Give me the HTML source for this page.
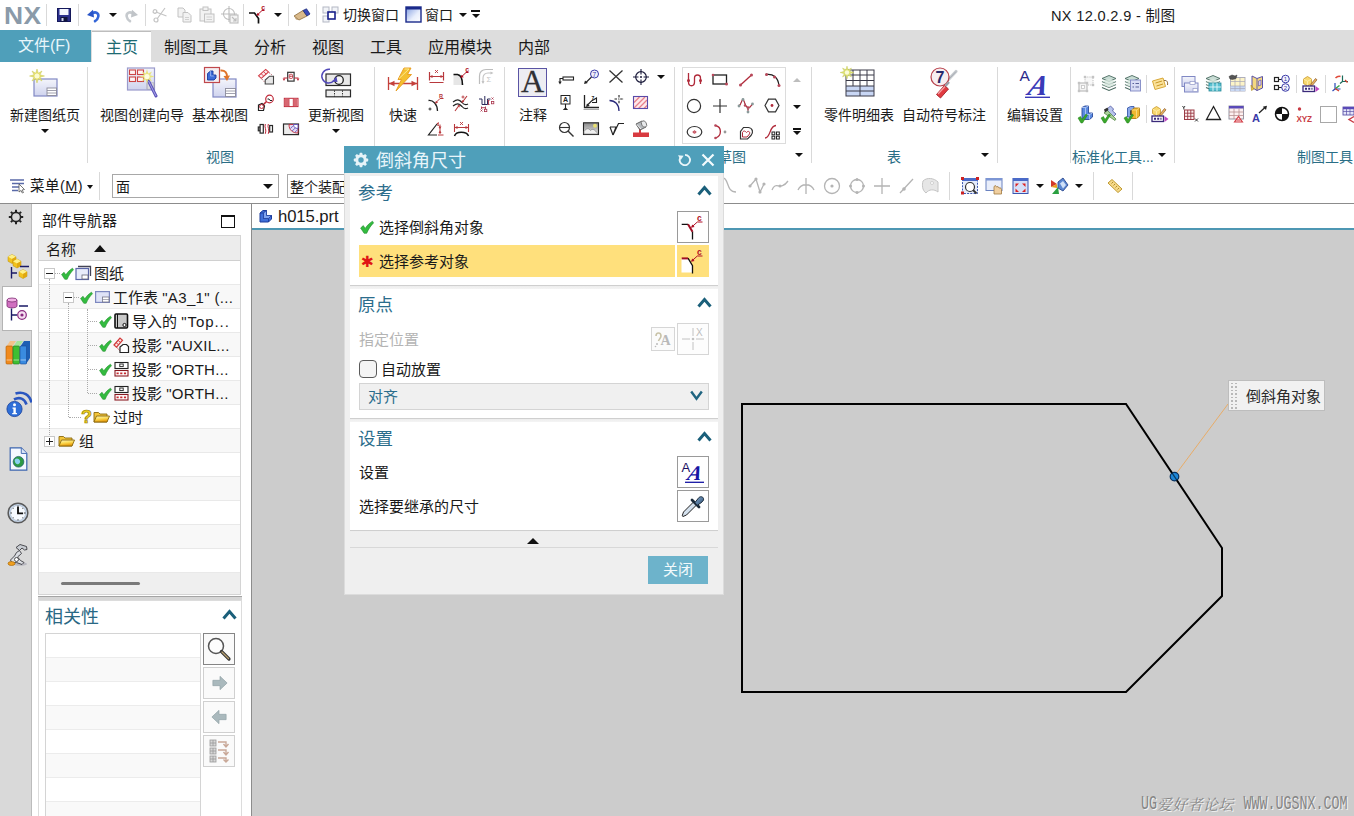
<!DOCTYPE html>
<html><head><meta charset="utf-8"><title>NX 12.0.2.9 - 制图</title>
<style>
html,body{margin:0;padding:0}
body{width:1354px;height:816px;position:relative;overflow:hidden;background:#fff;font-family:"Liberation Sans","Noto Sans CJK SC",sans-serif;font-size:14px;color:#1a1a1a}
.a{position:absolute}
.t{position:absolute;white-space:nowrap;line-height:20px;height:20px}
.vs{position:absolute;width:1px;background:#d9d9d9}
.hs{position:absolute;height:1px;background:#d9d9d9}
svg{position:absolute;overflow:visible}
.teal{color:#2a6e86}
.tri{position:absolute;width:0;height:0;border-left:4px solid transparent;border-right:4px solid transparent;border-top:4px solid #111}
</style></head><body>
<!-- TITLE BAR -->
<div class="a" id="titlebar" style="left:0;top:0;width:1354px;height:30px;background:#fff"></div>
<div class="t" style="left:4px;top:3px;font:bold 24px/26px 'Liberation Sans',sans-serif;color:#8a9aa9;letter-spacing:.5px;transform:scaleX(1.1);transform-origin:0 0">NX</div>
<div class="t" style="left:343px;top:5px;font-size:14px">切换窗口</div>
<div class="t" style="left:425px;top:5px;font-size:14px">窗口</div>
<div class="t" style="left:1051px;top:6px;font-size:14.600px;letter-spacing:.32px">NX 12.0.2.9 - 制图</div>
<!-- title icons -->
<div class="vs" style="left:46px;top:4px;height:22px"></div>
<svg style="left:57px;top:8px" width="14" height="14" viewBox="0 0 14 14"><rect x=".5" y=".5" width="13" height="13" fill="#2a2f8c" stroke="#14185a" stroke-width="1"/><rect x="2.500" y="1" width="9" height="6" fill="#f4f6ff"/><rect x="3.500" y="9" width="7" height="4.500" fill="#10143c"/><rect x="4.500" y="10" width="2" height="3" fill="#cfd4f0"/></svg>
<div class="vs" style="left:78px;top:4px;height:22px"></div>
<svg style="left:86px;top:8px" width="15" height="14" viewBox="0 0 15 14"><path d="M6.500 5.200C9.500 3.200 13 5 12.300 8.600C12 10.400 10.800 12 9 13.200" fill="none" stroke="#3466d8" stroke-width="2.600" stroke-linecap="round"/><path d="M1 7L7 1.800L8 9.500Z" fill="#2a56c8"/></svg>
<div class="tri" style="left:109px;top:13px"></div>
<svg style="left:124px;top:8px" width="15" height="14" viewBox="0 0 15 14"><path d="M8.500 5.200C5.500 3.200 2 5 2.700 8.600C3 10.400 4.200 12 6 13.200" fill="none" stroke="#c6cace" stroke-width="2.600" stroke-linecap="round"/><path d="M14 7L8 1.800L7 9.500Z" fill="#c0c4c8"/></svg>
<div class="vs" style="left:145px;top:4px;height:22px"></div>
<svg style="left:152px;top:7px" width="17" height="16" viewBox="0 0 17 16"><g fill="none" stroke="#c4c4c4" stroke-width="1.200"><path d="M13 1L5 12M4 5L14.500 9"/><circle cx="4" cy="13" r="2"/><circle cx="2.800" cy="4.500" r="1.800" transform="rotate(20 3 5)"/></g></svg>
<svg style="left:177px;top:7px" width="15" height="16" viewBox="0 0 15 16"><g fill="#f2f2f2" stroke="#c2c2c2" stroke-width="1"><path d="M1 1H6L8 3V10H1Z"/><path d="M6 5.500H11L14 8.500V15H6Z"/></g><path d="M8 10.500H12M8 12.500H12" stroke="#c8c8c8" stroke-width=".8"/></svg>
<svg style="left:199px;top:6px" width="16" height="17" viewBox="0 0 16 17"><g fill="#f2f2f2" stroke="#c2c2c2" stroke-width="1"><rect x="1" y="3" width="11" height="12"/><rect x="4" y="1" width="5" height="3.500"/><rect x="5.500" y="8" width="9.500" height="8"/></g><path d="M7.500 11H13M7.500 13.500H13" stroke="#c8c8c8" stroke-width=".8"/></svg>
<svg style="left:221px;top:6px" width="18" height="18" viewBox="0 0 18 18"><g fill="none" stroke="#bdbdbd" stroke-width="1.100"><circle cx="8" cy="8" r="5.500"/><path d="M8 0V16M0 8H16"/><rect x="9" y="9" width="8" height="8" fill="#f4f4f4"/><path d="M11 11L15 15M15 12V15H12"/></g></svg>
<div class="vs" style="left:243px;top:4px;height:22px"></div>
<svg style="left:248px;top:5px" width="19" height="19" viewBox="0 0 19 19"><path d="M1 8H6.500L10.500 13.500V18.500" fill="none" stroke="#111" stroke-width="1.700"/><path d="M16.500 5.500H14L9.500 9.800" fill="none" stroke="#b01024" stroke-width="1"/><path d="M8.300 10.800L9.600 7.800L11.800 10.200Z" fill="#b01024"/><text x="13.200" y="4.800" font-family="Liberation Sans,sans-serif" font-size="7" font-weight="bold" fill="#b01024">c</text></svg>
<div class="tri" style="left:274px;top:13px"></div>
<div class="vs" style="left:288px;top:4px;height:22px"></div>
<svg style="left:293px;top:8px" width="18" height="13" viewBox="0 0 18 13"><path d="M1 8L10 2.500L14 8L6 12Z" fill="#d9b98a" stroke="#8a6a3a" stroke-width=".8"/><path d="M10 2.500L13.500 0.800L17 6L14 8Z" fill="#3a4ab8" stroke="#22307a" stroke-width=".8"/><path d="M1 8L3 11.500L6 12" fill="#b89868"/></svg>
<div class="vs" style="left:316px;top:4px;height:22px"></div>
<svg style="left:322px;top:6px" width="17" height="17" viewBox="0 0 17 17"><g fill="#f2f4f8" stroke="#b4b8c4" stroke-width="1"><rect x="1" y="1" width="6" height="6"/><rect x="10" y="1" width="6" height="6"/><rect x="1" y="10" width="6" height="6"/></g><rect x="6" y="6" width="7" height="7" fill="#fff" stroke="#18208a" stroke-width="1.600"/></svg>
<svg style="left:405px;top:6px" width="17" height="17" viewBox="0 0 17 17"><defs><linearGradient id="wg" x1="0" y1="0" x2="1" y2="1"><stop offset="0" stop-color="#7f9be0"/><stop offset=".6" stop-color="#e8eefc"/><stop offset="1" stop-color="#fff"/></linearGradient></defs><rect x="1" y="1" width="15" height="15" fill="url(#wg)" stroke="#1a2a8a" stroke-width="1.400"/><rect x="1" y="1" width="15" height="2.500" fill="#1a2a8a"/></svg>
<div class="tri" style="left:459px;top:13px"></div>
<div class="a" style="left:471px;top:10px;width:9px;height:2px;background:#111"></div>
<div class="tri" style="left:471.500px;top:14px"></div>
<!-- TAB BAR -->
<div class="a" style="left:0;top:30px;width:1354px;height:32px;background:#dddddd"></div>
<div class="a" style="left:0;top:30px;width:91px;height:32px;background:#4f9fba"></div>
<div class="t" style="left:18px;top:35px;font-size:16px;line-height:22px;color:#e8f6fb">文件(F)</div>
<div class="a" style="left:92px;top:31px;width:59px;height:31px;background:#fff;border-top:1px solid #bdbdbd;box-sizing:border-box"></div>
<div class="t" style="left:106px;top:37px;font-size:16px;line-height:22px;color:#1d6a72">主页</div>
<div class="t" style="left:164px;top:37px;font-size:16px;line-height:22px">制图工具</div>
<div class="t" style="left:254px;top:37px;font-size:16px;line-height:22px">分析</div>
<div class="t" style="left:312px;top:37px;font-size:16px;line-height:22px">视图</div>
<div class="t" style="left:370px;top:37px;font-size:16px;line-height:22px">工具</div>
<div class="t" style="left:428px;top:37px;font-size:16px;line-height:22px">应用模块</div>
<div class="t" style="left:518px;top:37px;font-size:16px;line-height:22px">内部</div>
<!-- RIBBON -->
<div class="a" id="ribbon" style="left:0;top:62px;width:1354px;height:106px;background:#fff;border-bottom:1px solid #d5d5d5;box-sizing:border-box"></div>
<!-- ribbon group 1 -->
<svg style="left:30px;top:68px" width="30" height="30" viewBox="0 0 30 30"><defs><linearGradient id="sh" x1="0" y1="0" x2="0" y2="1"><stop offset="0" stop-color="#f4f5fb"/><stop offset="1" stop-color="#cfd3ee"/></linearGradient></defs><rect x="4" y="11" width="23" height="17" fill="url(#sh)" stroke="#8088c4" stroke-width="1.200"/><rect x="17" y="20" width="9.500" height="7.500" fill="#fff" stroke="#8a8a9a" stroke-width=".9"/><path d="M17 22.500H26.500M17 25H26.500" stroke="#8a8a9a" stroke-width=".8"/><path d="M7 1L8.300 5.200L12 3L10 6.800L14.500 8L10 9.200L12 13L8.300 10.800L7 15L5.700 10.800L2 13L4 9.200L-.5 8L4 6.800L2 3L5.700 5.200Z" fill="#e6e070" stroke="#c8c85a" stroke-width=".5"/><circle cx="7" cy="8" r="2.500" fill="#fbfbd0"/></svg>
<div class="t" style="left:10px;top:105px">新建图纸页</div>
<div class="tri" style="left:41px;top:129px"></div>
<div class="vs" style="left:87px;top:67px;height:96px"></div>
<!-- group 2: view -->
<svg style="left:126px;top:66px" width="34" height="34" viewBox="0 0 34 34"><rect x="1.500" y="2" width="27" height="22" fill="url(#sh)" stroke="#9a9acc" stroke-width="1.200"/><g fill="#fdf3f3" stroke="#cc4444" stroke-width="1.100"><rect x="3.500" y="4" width="6" height="4.500"/><rect x="11.500" y="4" width="6" height="4.500"/><rect x="3.500" y="11" width="6" height="4.500"/><rect x="11.500" y="11" width="6" height="4.500"/></g><rect x="21" y="17" width="7" height="6" fill="#fff" stroke="#9a9aa8" stroke-width=".8"/><path d="M21 19H28M21 21H28" stroke="#9a9aa8" stroke-width=".7"/><path d="M22 14L30 30" stroke="#5a52b8" stroke-width="3" stroke-linecap="round"/><path d="M22.500 15L30 30" stroke="#a8a4e8" stroke-width="1"/><path d="M21 3L22.200 7.500L26 5.500L24 9.300L28.500 10.500L24 11.700L26 15.500L22.200 13.500L21 18L19.800 13.500L16 15.500L18 11.700L13.500 10.500L18 9.300L16 5.500L19.800 7.500Z" fill="#e8e478" opacity=".95"/><circle cx="21" cy="10.500" r="2.600" fill="#fdfde0"/></svg>
<div class="t" style="left:100px;top:105px">视图创建向导</div>
<svg style="left:203px;top:66px" width="34" height="34" viewBox="0 0 34 34"><rect x="10" y="13" width="23" height="18" fill="url(#sh)" stroke="#8088c4" stroke-width="1.200"/><rect x="22.500" y="22.500" width="10" height="8" fill="#fff" stroke="#8a8a9a" stroke-width=".9"/><path d="M22.500 25H32.500M22.500 27.500H32.500" stroke="#8a8a9a" stroke-width=".8"/><rect x="1.500" y="1.500" width="15" height="15" fill="#f4eef2" stroke="#c0484c" stroke-width="1.200"/><path d="M4.500 7.500L7.500 5H10V9H13V12L11 14H4.500Z" fill="#3d6cd8" stroke="#1a3a9c" stroke-width=".9"/><path d="M7.500 5V10H11" fill="none" stroke="#9cb8f4" stroke-width=".8"/><path d="M17.500 4.500C22 4 24.500 7 24 11.500" fill="none" stroke="#e0742c" stroke-width="2"/><path d="M20.500 10L24 15L27 9.500Z" fill="#e0742c"/></svg>
<div class="t" style="left:192px;top:105px">基本视图</div>
<svg style="left:257px;top:68px" width="18" height="18" viewBox="0 0 18 18"><path d="M1.500 7.800L8.700 1.400L11.500 3.900L4.300 10.300Z" fill="#fdeaec" stroke="#d23a44" stroke-width="1.100"/><path d="M4 5.600L6.800 8.100M6.300 3.500L9.100 6" stroke="#d23a44" stroke-width=".9"/><path d="M12 4.500L15.500 7.500M4.800 11L7.500 14" stroke="#a8323c" stroke-width=".9" stroke-dasharray="1.200 1.200"/><path d="M8.200 16V12L12.500 8.200H16.500V16Z" fill="#e8e8e8" stroke="#444" stroke-width="1.100"/></svg>
<svg style="left:282px;top:70px" width="18" height="14" viewBox="0 0 18 14"><rect x="5.700" y="2.300" width="6.400" height="8.800" fill="#fff" stroke="#333" stroke-width="1.200"/><rect x="7.300" y="4.300" width="3.200" height="4.200" rx="1" fill="none" stroke="#c02a3a" stroke-width=".9"/><circle cx="8.900" cy="6.400" r=".8" fill="#c02a3a"/><path d="M1.500 8H5.700M12.100 8H16.500" fill="none" stroke="#c02a3a" stroke-width="1"/><path d="M0.600 8.500L2 11L3.400 8.500ZM14.600 8.500L16 11L17.400 8.500Z" fill="#c02a3a"/></svg>
<svg style="left:257px;top:94px" width="18" height="18" viewBox="0 0 18 18"><circle cx="12.500" cy="5" r="3.800" fill="#fff" stroke="#c02a3a" stroke-width="1.200"/><path d="M10.500 5H12L13 6.500H15" fill="none" stroke="#222" stroke-width="1"/><path d="M9.500 7.500L6 11" stroke="#c02a3a" stroke-width="1.600"/><path d="M1.500 11L5 9.500L7.500 12L6.500 16.500H1.500Z" fill="#fff" stroke="#222" stroke-width="1.200"/><circle cx="4.600" cy="12.500" r="2" fill="none" stroke="#c02a3a" stroke-width="1"/></svg>
<svg style="left:283px;top:97px" width="16" height="11" viewBox="0 0 16 11"><defs><pattern id="xh" width="2" height="2" patternUnits="userSpaceOnUse"><rect width="2" height="2" fill="#fbe4e6"/><path d="M0 0L2 2M2 0L0 2" stroke="#c8303f" stroke-width=".7"/></pattern></defs><rect x="1.300" y="1.300" width="13.700" height="8.300" fill="#fff" stroke="#c02a3a" stroke-width="1"/><rect x="1.800" y="1.800" width="4" height="7.300" fill="url(#xh)"/><rect x="10.500" y="1.800" width="4" height="7.300" fill="url(#xh)"/><path d="M6 1.500V9.500M10.300 1.500V9.500" stroke="#c02a3a" stroke-width=".8"/></svg>
<svg style="left:257px;top:122px" width="18" height="14" viewBox="0 0 18 14"><g fill="#fff" stroke="#2a2a2a" stroke-width="1.200"><rect x="1.300" y="5" width="1.800" height="3.800"/><rect x="3.100" y="2.500" width="3.200" height="8.600"/><rect x="12.700" y="3.500" width="2.800" height="6.500"/></g><path d="M8.300 2C7 5 10 8 8.300 11.800M11.300 2C10 5 13 8 11.300 11.800" fill="none" stroke="#c02a3a" stroke-width="1"/></svg>
<svg style="left:282px;top:122px" width="18" height="15" viewBox="0 0 18 15"><rect x="1.500" y="2" width="15" height="10.600" fill="#ececec" stroke="#2a2a2a" stroke-width="1.200"/><path d="M7 2.500C7 8 10.500 11 16 11V2.500Z" fill="#e4dcf4" stroke="#c02a3a" stroke-width=".9"/><path d="M11.500 2.500C11.500 5 13 6.500 16 6.500V2.500Z" fill="#fff" stroke="#5a52b8" stroke-width=".9"/><path d="M8.500 6.500L10.800 4M10 9L13.300 6M12.800 10.300L15.800 7.500" stroke="#5a52b8" stroke-width=".8"/></svg>
<svg style="left:319px;top:66px" width="34" height="34" viewBox="0 0 34 34"><rect x="7" y="8" width="24.500" height="11.500" fill="#e8e8e8" stroke="#2a2a2a" stroke-width="1.200"/><rect x="7" y="24" width="24.500" height="6.800" fill="#ececec" stroke="#2a2a2a" stroke-width="1.200"/><path d="M15.500 24.500V30.500M23.500 24.500V30.500" stroke="#222" stroke-width="1" stroke-dasharray="1.300 1.300"/><circle cx="20" cy="14" r="4.300" fill="#f4f4f4" stroke="#222" stroke-width="1.300"/><path d="M11 3.200C4.500 2.500 1.500 9 3.500 13C5.500 17.500 11.500 18.500 15 14.500" fill="none" stroke="#5048b8" stroke-width="1.500"/><path d="M13 15.500L17.500 10.500L18.500 16Z" fill="#5048b8"/></svg>
<div class="t" style="left:308px;top:105px">更新视图</div>
<div class="tri" style="left:332px;top:129px"></div>
<div class="t teal" style="left:206px;top:147px">视图</div>
<div class="vs" style="left:374px;top:67px;height:96px"></div>
<!-- group 3: dimension -->
<svg style="left:386px;top:66px" width="34" height="30" viewBox="0 0 34 30"><path d="M2.500 11V24M31.500 11V24M3 17.500H31" stroke="#c4403c" stroke-width="1.300" fill="none"/><path d="M3 17.500L8.500 14.800V20.200ZM31 17.500L25.500 14.800V20.200Z" fill="#c4403c"/><path d="M18 2H25L21.500 8.500H25.500L10 25L15.500 13.500H12Z" fill="#f4c030" stroke="#e89a1c" stroke-width=".9"/><path d="M18.500 3H23L13 12.500" fill="none" stroke="#fce890" stroke-width="1"/></svg>
<div class="t" style="left:389px;top:105px">快速</div>
<svg style="left:428px;top:69px" width="17" height="16" viewBox="0 0 17 16"><path d="M1.500 3V11.500M15.500 3V11.500M1.500 7.500H15.500M1.500 13.500H15.500" stroke="#b8383c" stroke-width="1.200" fill="none"/><path d="M1.500 7.500L4.500 6V9ZM15.500 7.500L12.500 6V9Z" fill="#b8383c"/><path d="M7 1L10 4M10 1L7 4" stroke="#b8383c" stroke-width=".9"/></svg>
<svg style="left:452px;top:67px" width="19" height="19" viewBox="0 0 19 19"><path d="M1.500 8H6L10 13V18H1.500Z" fill="#e6e6e6"/><path d="M1.500 7.500H5.500C8.500 8 10.500 11 10.500 18" fill="none" stroke="#111" stroke-width="1.600"/><path d="M16.500 5.500H14L9.500 9.800" fill="none" stroke="#b01024" stroke-width="1"/><path d="M8.300 10.800L9.600 7.800L11.800 10.200Z" fill="#b01024"/><text x="13.200" y="4.800" font-family="Liberation Sans,sans-serif" font-size="7" font-weight="bold" fill="#b01024">c</text></svg>
<svg style="left:478px;top:68px" width="17" height="18" viewBox="0 0 17 18"><path d="M1.500 16V8C1.500 4 4 1.500 8 1.500H15" fill="none" stroke="#bdbdbd" stroke-width="1.200"/><path d="M5 15V10C5 7 7 5 10 5H14" fill="none" stroke="#c4c4c4" stroke-width="1.100"/><path d="M3.500 13L5 16L6.500 13ZM12.500 3.500L15.500 5L12.500 6.500Z" fill="#c4c4c4"/><text x="8.500" y="14" font-family="Liberation Sans,sans-serif" font-size="7.500" fill="#c4c4c4">Σ</text></svg>
<svg style="left:427px;top:94px" width="18" height="18" viewBox="0 0 18 18"><path d="M1.500 6.500C6 6 10.500 10 10.500 17" fill="none" stroke="#222" stroke-width="1.300"/><path d="M9 8.500L13 4.500M13 4.500H16.500" stroke="#b8383c" stroke-width="1" fill="none"/><path d="M8 9.800L9 6.800L11 8.800Z" fill="#b8383c"/><text x="12" y="4" font-family="Liberation Sans,sans-serif" font-size="5.500" font-weight="bold" fill="#b8383c">R</text><path d="M3 13.500V16.500M1.500 15H4.500" stroke="#222" stroke-width=".9"/></svg>
<svg style="left:452px;top:94px" width="18" height="18" viewBox="0 0 18 18"><path d="M1 8C5 5 7 5 10 8.500C12 11 14 11 16 10M1 12C5 9 7 9 10 12.500C12 15 14 15 16 14" fill="none" stroke="#222" stroke-width="1.200"/><path d="M15 2L10.500 8M3 17L7 11.500" stroke="#b8383c" stroke-width="1.100"/><path d="M9.500 9L10 6L12.300 7.700ZM8 10.500L7.500 13.500L5.300 11.800Z" fill="#b8383c"/><path d="M11 1.500V4.500M9.500 3H12.500" stroke="#b8383c" stroke-width=".9"/></svg>
<svg style="left:478px;top:94px" width="18" height="18" viewBox="0 0 18 18"><path d="M1 5H4V10.500H9.500V5H12.500M6.800 2V10.500" fill="none" stroke="#2a2a5a" stroke-width="1"/><path d="M10.500 6.500V10.500M9.500 6.500H11.500M9.500 10.500H11.500M3.500 12.500V15M7.500 12.500V15M3.500 13.700H7.500" stroke="#a8324a" stroke-width=".9" fill="none"/><g fill="none" stroke="#a8324a" stroke-width=".8"><path d="M13.500 3.500L15.500 5.500M15.500 3.500L13.500 5.500"/><rect x="13.500" y="7.500" width="2.300" height="2.300"/><path d="M2.500 15.500L4.500 17.500M4.500 15.500L2.500 17.500"/><rect x="6.500" y="15.300" width="2.300" height="2.300"/></g></svg>
<svg style="left:427px;top:121px" width="18" height="16" viewBox="0 0 18 16"><path d="M10 3L1.500 14H10" fill="none" stroke="#222" stroke-width="1.200"/><path d="M13 3.500V13M11 14H16.500M10 4C11.500 4 12.500 5 13 6" stroke="#b8383c" stroke-width="1" fill="none"/><path d="M11.500 12L13 9.500L14.500 12ZM11.500 6L13 8L14.500 5.500ZM9.500 2.500L12 1L11.500 4Z" fill="#b8383c"/></svg>
<svg style="left:453px;top:121px" width="17" height="16" viewBox="0 0 17 16"><path d="M1.500 15C3 10 13.500 10 15.500 15" fill="none" stroke="#111" stroke-width="1.500"/><path d="M1.500 3V11M15.500 3V11M1.500 6.500H15.500" stroke="#b8383c" stroke-width="1.100" fill="none"/><path d="M1.500 6.500L4.500 5V8ZM15.500 6.500L12.500 5V8Z" fill="#b8383c"/><path d="M7 1L10 4M10 1L7 4" stroke="#b8383c" stroke-width=".9"/></svg>
<div class="vs" style="left:504px;top:67px;height:96px"></div>
<!-- group 4: annotation -->
<div class="a" style="left:518px;top:68px;width:29px;height:29px;background:#ededf2;border:1px solid #5a54a4;box-sizing:border-box"></div>
<div class="t" style="left:519px;top:64px;width:27px;height:34px;text-align:center;font:32px/34px 'Liberation Serif',serif;color:#303034;-webkit-text-stroke:.3px #303034">A</div>
<div class="t" style="left:519px;top:105px">注释</div>
<svg style="left:557px;top:74px" width="18" height="12" viewBox="0 0 18 12"><path d="M6 4.500H3V9" fill="none" stroke="#222" stroke-width="1.100"/><path d="M1.300 7.500L3 10.500L4.700 7.500Z" fill="#222"/><rect x="6" y="3" width="10.500" height="3" fill="#fff" stroke="#222" stroke-width="1.100"/></svg>
<svg style="left:583px;top:69px" width="17" height="16" viewBox="0 0 17 16"><circle cx="11.500" cy="5" r="4" fill="#f0f0fc" stroke="#3a3aa8" stroke-width="1"/><text x="9.500" y="7.500" font-family="Liberation Sans,sans-serif" font-size="6.500" fill="#3a3aa8">7</text><path d="M8.500 8L2.500 14" stroke="#222" stroke-width="1.100"/><path d="M1 15L2 11.500L4.800 14Z" fill="#222"/></svg>
<svg style="left:608px;top:69px" width="16" height="15" viewBox="0 0 16 15"><path d="M1.500 1.500L14.500 13.500M14.500 1.500L1.500 13.500" stroke="#333" stroke-width="1.300"/></svg>
<svg style="left:632px;top:68px" width="18" height="18" viewBox="0 0 18 18"><circle cx="9" cy="9" r="5.300" fill="none" stroke="#1c1c3c" stroke-width="1.200"/><path d="M9 1V6.500M9 11.500V17M1 9H6.500M11.500 9H17" stroke="#1c1c3c" stroke-width="1.100"/><circle cx="9" cy="9" r="1" fill="#1c1c3c"/></svg>
<div class="tri" style="left:657px;top:75px"></div>
<svg style="left:559px;top:94px" width="13" height="17" viewBox="0 0 13 17"><rect x="2" y="1.500" width="9" height="8.500" fill="#fff" stroke="#222" stroke-width="1"/><text x="3.900" y="8.300" font-family="Liberation Sans,sans-serif" font-size="7" font-weight="bold" fill="#222">A</text><path d="M6.500 10V14" stroke="#222" stroke-width="1.100"/><path d="M3.800 16L6.500 13.200L9.200 16Z" fill="#222"/></svg>
<svg style="left:582px;top:94px" width="18" height="18" viewBox="0 0 18 18"><path d="M2.500 1V13.500H17" fill="none" stroke="#222" stroke-width="1.300"/><path d="M1.500 15.500H17" stroke="#aaa" stroke-width="1"/><path d="M5 11.500L9.500 7L14.500 4V8.500H10" fill="none" stroke="#222" stroke-width="1.100"/><path d="M4 13L5 9.500L7.800 12Z" fill="#222"/><text x="9.500" y="6" font-family="Liberation Sans,sans-serif" font-size="5" font-weight="bold" fill="#222">7</text></svg>
<svg style="left:608px;top:94px" width="18" height="18" viewBox="0 0 18 18"><path d="M1.500 6.500C7 6.500 11 10.500 11 17" fill="none" stroke="#2a2a7a" stroke-width="1.300"/><path d="M11 1V10M6.500 5H16" stroke="#222" stroke-width="1.100" stroke-dasharray="2.500 1.200 .8 1.200"/></svg>
<svg style="left:632px;top:95px" width="17" height="15" viewBox="0 0 17 15"><rect x="1.500" y="1.500" width="14" height="12" fill="#fde8ea"/><path d="M2 7.500L7.500 2M2 13L13 2M6.500 13.500L15 5M12 13.500L15 10.500" stroke="#e8808a" stroke-width="1.300"/><rect x="1.500" y="1.500" width="14" height="12" fill="none" stroke="#5a4aa8" stroke-width="1.100"/></svg>
<svg style="left:558px;top:121px" width="17" height="17" viewBox="0 0 17 17"><circle cx="6.500" cy="6.500" r="5" fill="#fff" stroke="#333" stroke-width="1.200"/><path d="M2 6.500H11" stroke="#333" stroke-width="1.100"/><path d="M10 10L15.500 15.500" stroke="#333" stroke-width="1.400"/></svg>
<svg style="left:582px;top:121px" width="18" height="15" viewBox="0 0 18 15"><defs><linearGradient id="ig" x1="0" y1="0" x2="0" y2="1"><stop offset="0" stop-color="#8a8a8a"/><stop offset="1" stop-color="#e4e4e4"/></linearGradient></defs><rect x="1.500" y="1.800" width="15" height="11.700" fill="url(#ig)" stroke="#222" stroke-width="1.100"/><path d="M2 10.500C4.500 7 6.500 7 8.500 9.500C10.500 7.500 12.500 8 16 13H2Z" fill="#f0f0f0" stroke="#777" stroke-width=".6"/><circle cx="13" cy="4.800" r="2" fill="#e8e070"/></svg>
<svg style="left:609px;top:122px" width="16" height="15" viewBox="0 0 16 15"><path d="M1 5H7L4 13L9.500 1.500H15" fill="none" stroke="#222" stroke-width="1.200"/><path d="M1 5L4 13" stroke="#222" stroke-width="1.200"/></svg>
<svg style="left:632px;top:120px" width="18" height="18" viewBox="0 0 18 18"><rect x="1" y="12.500" width="16" height="4.500" fill="#d83a40"/><path d="M8 8V13" stroke="#d83a40" stroke-width="2"/><path d="M4 4L10 1L14 7L8 10Z" fill="#b4b8bc" stroke="#555" stroke-width=".9"/><ellipse cx="12" cy="4" rx="2.400" ry="3.400" transform="rotate(-28 12 4)" fill="#e8eaec" stroke="#666" stroke-width=".8"/><path d="M5 4.500L9 9" stroke="#eee" stroke-width="1"/></svg>
<div class="vs" style="left:674px;top:67px;height:96px"></div>
<!-- group 5: sketch -->
<div class="a" style="left:682px;top:67px;width:104px;height:77px;border:1px solid #dcdcdc;box-sizing:border-box"></div>
<svg style="left:686px;top:72px" width="17" height="16" viewBox="0 0 17 16"><path d="M2.500 1V10C2.500 15 8.500 15 8.500 10V6C8.500 2 14.500 2 14.500 6V12" fill="none" stroke="#b02a3a" stroke-width="1.300"/><circle cx="2.500" cy="8.500" r="1.500" fill="#b02a3a"/><circle cx="14.500" cy="8.500" r="1.500" fill="#b02a3a"/></svg>
<svg style="left:711px;top:73px" width="18" height="13" viewBox="0 0 18 13"><rect x="2" y="2" width="13.500" height="9" fill="none" stroke="#222" stroke-width="1.300"/><circle cx="2" cy="2" r="1.300" fill="#b8485a"/><circle cx="15.500" cy="11" r="1.500" fill="#b8485a"/></svg>
<svg style="left:738px;top:73px" width="16" height="14" viewBox="0 0 16 14"><path d="M2.500 12L13.500 2" stroke="#b02a3a" stroke-width="1.300"/><circle cx="2.500" cy="12" r="1.500" fill="#b8485a"/><circle cx="13.500" cy="2" r="1.500" fill="#b8485a"/></svg>
<svg style="left:764px;top:72px" width="17" height="16" viewBox="0 0 17 16"><path d="M2 2.500C9 1.500 14 5 15 13.500" fill="none" stroke="#222" stroke-width="1.300"/><circle cx="2.500" cy="2.500" r="1.500" fill="#b8485a"/><circle cx="10.500" cy="5" r="1.500" fill="#b8485a"/><circle cx="15" cy="13.500" r="1.500" fill="#b8485a"/></svg>
<svg style="left:686px;top:98px" width="16" height="16" viewBox="0 0 16 16"><circle cx="8" cy="8" r="6.600" fill="none" stroke="#333" stroke-width="1.200"/></svg>
<svg style="left:712px;top:98px" width="16" height="16" viewBox="0 0 16 16"><path d="M8 1V15M1 8H15" stroke="#333" stroke-width="1.200"/></svg>
<svg style="left:737px;top:97px" width="18" height="17" viewBox="0 0 18 17"><path d="M2 9L6 2.500L11 13L15.500 7" fill="none" stroke="#999" stroke-width=".9"/><path d="M2 9C5 7 4 3 6 2.500C8 3 7 9 11 10.500C14 11 14 8 15.500 7" fill="none" stroke="#b02a3a" stroke-width="1.100"/><path d="M11 10.500V15" stroke="#b02a3a" stroke-width="1"/><g fill="#8a9a9a"><circle cx="2" cy="9" r="1.400"/><circle cx="6" cy="2.500" r="1.400"/><circle cx="15.500" cy="7" r="1.400"/><circle cx="11" cy="15" r="1.400"/></g><circle cx="8" cy="8.500" r="1.200" fill="#b8485a"/><circle cx="11" cy="10.500" r="1.200" fill="#b8485a"/></svg>
<svg style="left:764px;top:98px" width="16" height="15" viewBox="0 0 16 15"><path d="M1 7.500L4.500 1.200H11.500L15 7.500L11.500 13.800H4.500Z" fill="none" stroke="#333" stroke-width="1.200"/><circle cx="8" cy="7.500" r="1.400" fill="#b02a3a"/></svg>
<svg style="left:686px;top:125px" width="17" height="14" viewBox="0 0 17 14"><ellipse cx="8.500" cy="7" rx="7.300" ry="5.500" fill="none" stroke="#333" stroke-width="1.200"/><circle cx="8.500" cy="7" r="1.500" fill="#b02a3a"/><path d="M6 7H11M8.500 5V9" stroke="#d87a84" stroke-width=".7"/></svg>
<svg style="left:713px;top:124px" width="15" height="16" viewBox="0 0 15 16"><path d="M2.500 1.500C9 3 9 12 2.500 14" fill="none" stroke="#b02a3a" stroke-width="1.300"/><circle cx="2.500" cy="1.500" r="1.300" fill="#b8485a"/><circle cx="2.500" cy="14" r="1.300" fill="#b8485a"/><circle cx="12" cy="8" r="1.400" fill="#999"/></svg>
<svg style="left:739px;top:126px" width="15" height="14" viewBox="0 0 15 14"><path d="M1.500 13V5.500L4.500 1.500H9.500C14 2 14.500 7 12 9.500L8.500 13Z" fill="none" stroke="#333" stroke-width="1.200"/><path d="M3.500 11V6.500C5 3.500 7 6 7.500 6.500C9 4.500 11.500 5.500 10.500 8L8 11Z" fill="none" stroke="#b02a3a" stroke-width="1"/></svg>
<svg style="left:764px;top:124px" width="17" height="16" viewBox="0 0 17 16"><path d="M1 14C7 14 5 1.500 12 1.500" fill="none" stroke="#b02a3a" stroke-width="1.300"/><g fill="#fff" stroke="#222" stroke-width="1"><rect x="8" y="8" width="2.800" height="2.800"/><rect x="12.500" y="8" width="2.800" height="2.800"/><rect x="8" y="12.200" width="2.800" height="2.800"/><rect x="12.500" y="12.200" width="2.800" height="2.800"/></g></svg>
<div class="tri" style="left:793px;top:78px;border-top:none;border-bottom:4px solid #bdbdbd"></div>
<div class="tri" style="left:793px;top:105px"></div>
<div class="a" style="left:793px;top:128px;width:8px;height:1.500px;background:#111"></div>
<div class="tri" style="left:793px;top:131px"></div>
<div class="t teal" style="left:718px;top:147px">草图</div>
<div class="tri" style="left:795px;top:153px"></div>
<div class="vs" style="left:811px;top:67px;height:96px"></div>
<!-- group 6: table -->
<svg style="left:842px;top:66px" width="34" height="32" viewBox="0 0 34 32"><rect x="4" y="4" width="28" height="16" fill="#fff"/><rect x="4" y="20" width="28" height="10" fill="#c8d6f4"/><g stroke="#3a3a48" stroke-width="1" fill="none"><rect x="4" y="4" width="28" height="26"/><path d="M4 9H32M4 14.500H32M4 20H32M4 25H32M11 4V20M18 4V20M25 4V20M18 20V30"/></g><path d="M5 0L6.200 3.800L9.500 2L7.800 5.300L12 6.500L7.800 7.700L9.500 11L6.200 9.200L5 13L3.800 9.200L.5 11L2.200 7.700L-2 6.500L2.200 5.300L.5 2L3.800 3.800Z" fill="#dce070" stroke="#c4c860" stroke-width=".4"/><circle cx="5" cy="6.500" r="2.200" fill="#fbfbd8"/></svg>
<div class="t" style="left:824px;top:105px">零件明细表</div>
<svg style="left:928px;top:66px" width="32" height="34" viewBox="0 0 32 34"><path d="M19 15L28 5.500" stroke="#c8ccd0" stroke-width="3.200" stroke-linecap="round"/><path d="M19 15L28 5.500" stroke="#9aa0a8" stroke-width=".8"/><circle cx="12" cy="11" r="9" fill="#f6eef0" stroke="#b8404a" stroke-width="1.200"/><text x="7.500" y="17" font-family="Liberation Sans,sans-serif" font-size="16" font-weight="bold" fill="#28286a">7</text><path d="M8.500 28.500L16.500 19.500L20.500 23L12.500 32Z" fill="#e03a40" stroke="#a02028" stroke-width=".9"/><path d="M10 28L17 20.500" stroke="#f8a0a4" stroke-width="1.200"/><path d="M17.500 20L21 16" stroke="#9aa0a8" stroke-width="2.400"/></svg>
<div class="t" style="left:902px;top:105px">自动符号标注</div>
<div class="t teal" style="left:887px;top:147px">表</div>
<div class="tri" style="left:981px;top:153px"></div>
<div class="vs" style="left:997px;top:67px;height:96px"></div>
<!-- group 7: edit settings -->
<svg style="left:1018px;top:66px" width="34" height="34" viewBox="0 0 34 34"><text x="1.500" y="15" font-family="Liberation Sans,sans-serif" font-size="15.500" fill="#2a2a8a">A</text><text x="16" y="29.500" transform="skewX(-14)" font-family="Liberation Serif,serif" font-size="29" font-weight="bold" font-style="italic" fill="#3a3ab8">A</text><path d="M7 31.300H32" stroke="#3a3ab8" stroke-width="1.400"/></svg>
<div class="t" style="left:1007px;top:105px">编辑设置</div>
<div class="vs" style="left:1070px;top:67px;height:96px"></div>
<!-- group 8: standardization -->
<svg style="left:1077px;top:75px" width="18" height="18" viewBox="0 0 18 18"><rect x="8" y="2" width="8" height="8" fill="#f8f8f8" stroke="#c0c0c0" stroke-width="1" stroke-dasharray="1.200 1"/><rect x="2" y="8" width="8" height="8" fill="#f4f4f4" stroke="#bdbdbd" stroke-width="1.200"/><rect x="4.500" y="10.500" width="3" height="3" fill="#fff" stroke="#c4c4c4" stroke-width=".8"/><g fill="#c4c4c4"><rect x="0.800" y="6.800" width="2.400" height="2.400"/><rect x="8.800" y="6.800" width="2.400" height="2.400"/><rect x="0.800" y="14.800" width="2.400" height="2.400"/><rect x="8.800" y="14.800" width="2.400" height="2.400"/><rect x="6.800" y="0.800" width="2.400" height="2.400"/><rect x="14.800" y="0.800" width="2.400" height="2.400"/><rect x="14.800" y="8.800" width="2.400" height="2.400"/></g></svg>
<svg width="0" height="0"><defs><g id="lay"><path d="M1 4.500L8 1.500L15 4.500L8 7.500Z" fill="#c8dcd4" stroke="#4a6a60" stroke-width=".9"/><path d="M1 7.500L8 10.500L15 7.500M1 10.500L8 13.500L15 10.500M1 13.500L8 16.500L15 13.500" fill="none" stroke="#4a6a60" stroke-width="1.100"/><path d="M1 7.500L8 4.800L15 7.500L8 10.500ZM1 10.500L8 7.800L15 10.500L8 13.500Z" fill="#d8e8e0" opacity=".8"/></g></defs></svg>
<svg style="left:1101px;top:74px" width="17" height="18"><use href="#lay"/></svg>
<svg style="left:1124px;top:74px" width="17" height="18"><use href="#lay"/><rect x="6.500" y="6" width="10" height="11" fill="#d8dcf4" stroke="#8088c4" stroke-width=".9"/><path d="M8.500 9.500H10M11.500 9.500H15M8.500 13H10M11.500 13H15" stroke="#5a629a" stroke-width="1"/></svg>
<div class="vs" style="left:1146px;top:75px;height:18px"></div>
<svg style="left:1151px;top:76px" width="18" height="16" viewBox="0 0 18 16"><path d="M1.500 5L12 2L14.500 10.500L4 13.500Z" fill="#fbe29a" stroke="#d8a838" stroke-width="1"/><path d="M4.500 7L11 5M5.500 10L12 8" stroke="#c89828" stroke-width="1"/><path d="M13 4.500C16 4 17 6 16.500 9" fill="none" stroke="#8a6a3a" stroke-width="1"/></svg>
<svg width="0" height="0"><defs><path id="gchk" d="M0 5L2.500 3.500L4 6.500L8 1L9.500 2L4.500 10H3Z" fill="#3aa82a" stroke="#1f7a18" stroke-width=".5"/></defs></svg>
<svg style="left:1077px;top:105px" width="18" height="18" viewBox="0 0 18 18"><path d="M5 2.500L8 1H11.500V8H15.500V12L12.500 14.500H5Z" fill="#5a8ae0" stroke="#2a4a9c" stroke-width=".9"/><path d="M5 2.500H8.500V9.500H12.500V14.500M8.500 2.500L11.500 1M12.500 9.500L15.500 8" fill="none" stroke="#bcd0f8" stroke-width=".8"/><use href="#gchk" x="1" y="8"/></svg>
<svg style="left:1100px;top:105px" width="18" height="18" viewBox="0 0 18 18"><path d="M6.500 4.500L10.500 1L13.500 4L12.500 6L16 9L13.500 11.500L9.500 9L8 10.500Z" fill="#b8c4ec" stroke="#5a62a8" stroke-width=".9"/><path d="M4 8L7 5L16 14L15 15.500Z" fill="#a8d098" stroke="#5a8a4a" stroke-width=".8"/><path d="M4 4.500L7.500 2.500L8.500 5L5 7.500Z" fill="#333"/><use href="#gchk" x="1" y="8"/></svg>
<svg style="left:1123px;top:105px" width="18" height="18" viewBox="0 0 18 18"><path d="M4.500 3L7.500 1.500H11V12H4.500Z" fill="#8aa8e8" stroke="#3a5aac" stroke-width=".9"/><path d="M8.500 5L11.500 3H16.500V11L13.500 13.500H8.500Z" fill="#f0b830" stroke="#b07a10" stroke-width=".9"/><path d="M8.500 5H13.500V13.500M13.500 5L16.500 3" fill="none" stroke="#fbe08a" stroke-width=".8"/><path d="M7 5.500L8.500 5V10H7Z" fill="#444"/><use href="#gchk" x="1" y="8"/></svg>
<div class="vs" style="left:1146px;top:105px;height:18px"></div>
<svg width="0" height="0"><defs><g id="cubepen"><path d="M1.500 4L5.500 1.500L9.500 4V8.500L5.500 11L1.500 8.500Z" fill="#f8d870" stroke="#c8982a" stroke-width=".8"/><path d="M1.500 4L5.500 6.300L9.500 4M5.500 6.300V11" fill="none" stroke="#fff0b0" stroke-width=".8"/><path d="M9 9L13.500 3.500L15 4.800L10.500 10.300L8.500 11Z" fill="#e8b060" stroke="#8a5a2a" stroke-width=".7"/><rect x="1" y="11" width="11.500" height="5.500" fill="#fff" stroke="#3a2a7a" stroke-width="1.300"/><path d="M3 13.800H10.500" stroke="#3a2a7a" stroke-width="2" stroke-dasharray="2 1.200"/><path d="M13.500 11L17.500 14L13.500 17Z" fill="#c048c0"/></g></defs></svg>
<svg style="left:1151px;top:105px" width="18" height="18"><use href="#cubepen"/></svg>
<div class="t teal" style="left:1072px;top:147px">标准化工具...</div>
<div class="tri" style="left:1158px;top:153px"></div>
<div class="vs" style="left:1174px;top:67px;height:96px"></div>
<!-- group 9: drafting tools -->
<svg style="left:1181px;top:75px" width="18" height="18" viewBox="0 0 18 18"><rect x="1" y="1.500" width="13" height="10" fill="url(#sh)" stroke="#8088c4" stroke-width="1"/><rect x="3.500" y="8" width="13.500" height="9" fill="url(#sh)" stroke="#8088c4" stroke-width="1"/><rect x="9" y="6.500" width="5" height="3" fill="#fff" stroke="#9098c8" stroke-width=".7"/><rect x="12" y="13.500" width="4.500" height="3" fill="#fff" stroke="#9098c8" stroke-width=".7"/></svg>
<svg style="left:1205px;top:74px" width="17" height="18" viewBox="0 0 17 18"><use href="#lay"/><rect x="4" y="9" width="12" height="8" fill="#58c0d0" stroke="#2a8a9a" stroke-width=".8"/><path d="M4 13H16M8 9V17M12 9V17" stroke="#e8f8fa" stroke-width=".9"/></svg>
<svg style="left:1228px;top:74px" width="18" height="18" viewBox="0 0 18 18"><rect x="2.500" y="3.500" width="14.500" height="13.500" fill="#fdf4c8" stroke="#a8a8b8" stroke-width=".9"/><rect x="2.500" y="12" width="14.500" height="5" fill="#c8d8f4"/><path d="M2.500 7.500H17M2.500 12H17M2.500 14.500H17M7 3.500V17M12 3.500V17" stroke="#a8a8b8" stroke-width=".7"/><path d="M1 2.500L4 1L7 2L9 1L8 4.500L4.500 5.500L2 5Z" fill="#555" stroke="#333" stroke-width=".5"/></svg>
<svg style="left:1250px;top:74px" width="15" height="18" viewBox="0 0 15 18"><path d="M2 2L7 4.500L12.500 2.500V14L7 16.500L2 13.500Z" fill="#f4d880" stroke="#5a52a8" stroke-width="1"/><path d="M7 4.500V16.500" stroke="#5a52a8" stroke-width=".9"/><path d="M8.500 7L11 6V11L8.500 12Z" fill="#d8c8f0" stroke="#5a52a8" stroke-width=".6"/><path d="M1 11L4 15L1.500 16.500Z" fill="#e8c040" stroke="#a8882a" stroke-width=".6"/></svg>
<svg style="left:1273px;top:74px" width="18" height="18" viewBox="0 0 18 18"><g fill="#fff" stroke="#222" stroke-width="1.200"><rect x="1.500" y="3.500" width="4" height="4"/><rect x="1.500" y="11.500" width="4" height="4"/></g><path d="M5.500 5.500H9M5.500 13.500H9" stroke="#222" stroke-width="1.200"/><g fill="#f4f4fc" stroke="#3a3aa8" stroke-width="1"><circle cx="12.500" cy="5" r="3.800"/><circle cx="12.500" cy="13.500" r="3.800"/></g><text x="10.800" y="7.300" font-family="Liberation Sans,sans-serif" font-size="6" fill="#3a3aa8">1</text><text x="10.800" y="15.800" font-family="Liberation Sans,sans-serif" font-size="6" fill="#3a3aa8">2</text></svg>
<div class="vs" style="left:1296px;top:75px;height:18px"></div>
<svg style="left:1302px;top:75px" width="18" height="18"><use href="#cubepen"/></svg>
<div class="vs" style="left:1325px;top:75px;height:18px"></div>
<svg style="left:1331px;top:74px" width="18" height="18" viewBox="0 0 18 18"><path d="M11.500 1.500V7.500H17M11.500 7.500L9 9.500" fill="none" stroke="#1a6a5a" stroke-width="1.200"/><path d="M4 9V15H9.500M4 15L1.500 17" fill="none" stroke="#2a4ab8" stroke-width="1.200"/><path d="M4.500 14.500L8.500 11.500" stroke="#2aa040" stroke-width="1.400"/><path d="M4.500 4C6 2.500 8 2 9.500 2.500" fill="none" stroke="#e04a3a" stroke-width="1.500"/><path d="M4 14.500L8 17" stroke="#d23a2a" stroke-width="1.200"/><path d="M14 6L16.500 8.500" stroke="#d23a2a" stroke-width="1.200"/></svg>
<svg style="left:1181px;top:105px" width="18" height="18" viewBox="0 0 18 18"><rect x="3.500" y="5" width="9.500" height="9.500" fill="#fbeeee" stroke="#9a3a44" stroke-width="1"/><path d="M3.500 8.200H13M3.500 11.300H13M6.700 5V14.500M9.800 5V14.500" stroke="#9a3a44" stroke-width=".9"/><path d="M1.500 1L2.800 2.800L4 1M2.800 2.800V4.500" fill="none" stroke="#222" stroke-width=".9"/><path d="M14 13.500L17 16.500M17 13.500L14 16.500" stroke="#222" stroke-width=".9"/></svg>
<svg style="left:1205px;top:105px" width="17" height="16" viewBox="0 0 17 16"><path d="M8.500 1.500L15.500 14.500H1.500Z" fill="#fff" stroke="#222" stroke-width="1.300"/></svg>
<svg style="left:1228px;top:105px" width="17" height="18" viewBox="0 0 17 18"><rect x="1" y="1" width="14.500" height="13" fill="#fdf0f0" stroke="#8a8a9a" stroke-width=".9"/><rect x="1" y="1" width="14.500" height="2.500" fill="#5a4ab8"/><path d="M1 7H15.500M1 10.500H15.500M6 3.500V14M11 3.500V14" stroke="#b89090" stroke-width=".8"/><path d="M10.500 11.500L14.500 17H6.500Z" fill="#fde0e0" stroke="#d23a44" stroke-width="1.100"/><path d="M8.500 15H12.500" stroke="#d23a44" stroke-width="1"/></svg>
<svg style="left:1251px;top:105px" width="17" height="18" viewBox="0 0 17 18"><text x="1" y="16.500" font-family="Liberation Sans,sans-serif" font-size="11" font-weight="bold" fill="#3a3aa8">A</text><path d="M8 8L14.500 2" stroke="#222" stroke-width="1.300"/><path d="M16 .8L15 5L11.800 1.800Z" fill="#222"/></svg>
<svg style="left:1274px;top:106px" width="16" height="16" viewBox="0 0 16 16"><circle cx="8" cy="8" r="6.500" fill="#fff" stroke="#111" stroke-width="1.500"/><path d="M8 8V1.500A6.500 6.500 0 0 0 1.500 8ZM8 8V14.500A6.500 6.500 0 0 0 14.500 8Z" fill="#111"/></svg>
<svg style="left:1296px;top:105px" width="18" height="18" viewBox="0 0 18 18"><circle cx="3.500" cy="4" r="1.700" fill="#c83a44"/><text x=".5" y="16.500" font-family="Liberation Sans,sans-serif" font-size="8.200" font-weight="bold" fill="#c83a44" letter-spacing="-.2">XYZ</text></svg>
<div class="a" style="left:1320px;top:106px;width:17px;height:17px;border:1px solid #a8a8a8;box-sizing:border-box;background:#fff"></div>
<svg style="left:1342px;top:106px" width="12" height="18" viewBox="0 0 12 18"><rect x="1" y="1" width="11" height="8" fill="#e4e4f8" stroke="#5a52a8" stroke-width=".9"/><rect x="1" y="1" width="11" height="2.200" fill="#5a4ab8"/><path d="M1 5.500H12M4.500 3V9M8 3V9" stroke="#5a52a8" stroke-width=".7"/><path d="M12 10.500L7 13.500L12 16.500" fill="none" stroke="#c83a44" stroke-width="1.400"/></svg>
<div class="t teal" style="left:1297px;top:147px">制图工具</div>
<!-- SELECTION BAR -->
<div class="a" id="selbar" style="left:0;top:167px;width:1354px;height:37px;background:#fff;border-bottom:1px solid #8c8c8c;box-sizing:border-box"></div>
<!-- selbar content -->
<svg style="left:9px;top:178px" width="17" height="15" viewBox="0 0 17 15"><path d="M1 2H15M3 5.500H15M3 9H10M3 12.500H9" stroke="#5a6aa8" stroke-width="1.500"/><path d="M10 6L15.500 11.500L13 12L14.500 14.500L13.300 15L12 12.500L10 14Z" fill="#fff" stroke="#555" stroke-width=".8"/></svg>
<div class="t" style="left:30px;top:176px;font-size:14.500px;letter-spacing:.45px"><span>菜单(</span><span style="text-decoration:underline">M</span><span>)</span></div>
<div class="tri" style="left:87px;top:185px;border-left-width:3.500px;border-right-width:3.500px"></div>
<div class="vs" style="left:99px;top:172px;height:28px"></div>
<div class="a" style="left:112px;top:174px;width:167px;height:24px;border:1px solid #a8a8a8;box-sizing:border-box;background:#fff"></div>
<div class="t" style="left:116px;top:177px;font-size:14px">面</div>
<div class="a" style="left:263px;top:184px;width:0;height:0;border-left:5px solid transparent;border-right:5px solid transparent;border-top:5px solid #111"></div>
<div class="a" style="left:287px;top:174px;width:120px;height:24px;border:1px solid #a8a8a8;box-sizing:border-box;background:#fff"></div>
<div class="t" style="left:290px;top:177px;font-size:14px">整个装配</div>
<svg style="left:720px;top:176px" width="230" height="20" viewBox="720 176 230 20"><g fill="none" stroke="#b4b4b4" stroke-width="1.300"><path d="M723 178C729 178 726 192 736 192"/><path d="M750 186L756 179L760 192L764 184"/><path d="M772 190C776 180 780 192 788 181"/><path d="M806 178V194M798 190C801 183 811 183 814 190"/><circle cx="832" cy="186" r="7.500"/><circle cx="857" cy="186" r="6.500"/><path d="M882 178V194M874 186H890"/><path d="M900 193L913 179"/></g><g fill="#b4b4b4"><circle cx="750" cy="186" r="1.600"/><circle cx="756" cy="179" r="1.600"/><circle cx="760" cy="192" r="1.600"/><circle cx="764" cy="184" r="1.600"/><circle cx="780" cy="186" r="1.500"/><circle cx="832" cy="186" r="1.600"/><circle cx="857" cy="179.500" r="1.500"/><circle cx="857" cy="192.500" r="1.500"/><circle cx="850.500" cy="186" r="1.500"/><circle cx="863.500" cy="186" r="1.500"/><circle cx="904" cy="189" r="1.800"/></g><path d="M923 181C927 177 934 178 938 182V192C934 189 929 189 926 193C922 190 922 185 923 181Z" fill="#e6e6e6" stroke="#c4c4c4" stroke-width="1"/><circle cx="932" cy="183" r="1.500" fill="#fff" stroke="#bbb" stroke-width=".6"/></svg>
<div class="vs" style="left:949px;top:172px;height:28px"></div>
<svg style="left:961px;top:177px" width="18" height="18" viewBox="0 0 18 18"><rect x="1.500" y="1.500" width="15" height="15" fill="#e4ebfa" stroke="#3a56b0" stroke-width="1" stroke-dasharray="2 1.200"/><rect x="1" y="1" width="16" height="3" fill="#4a6ac8"/><circle cx="9" cy="10" r="4.500" fill="#fff" stroke="#333" stroke-width="1.200"/><path d="M12 13L15.500 16.500" stroke="#333" stroke-width="1.800"/><g fill="#c22"><rect x="0" y="14.500" width="3" height="3"/><rect x="15" y="0" width="3" height="3"/><rect x="0" y="0" width="3" height="3"/></g></svg>
<svg style="left:985px;top:177px" width="18" height="18" viewBox="0 0 18 18"><rect x="1" y="1.500" width="16" height="12" fill="#e9eefa" stroke="#6a82c0" stroke-width="1"/><rect x="1" y="1" width="16" height="2.500" fill="#7d96d4"/><path d="M9 17V9.500L10.500 8.500L11.500 10L13 9.500L14 11L15.500 10.800L16.500 12.500V17Z" fill="#f0cfa0" stroke="#a07840" stroke-width=".8"/></svg>
<svg style="left:1012px;top:177px" width="17" height="18" viewBox="0 0 17 18"><rect x="1" y="1.500" width="15" height="15" fill="#d6e0f8" stroke="#3a56b0" stroke-width="1"/><rect x="1" y="1" width="15" height="3" fill="#4a6ac8"/><g fill="#d22"><path d="M3.500 6.500H7L3.500 10Z"/><path d="M13.500 6.500H10L13.500 10Z"/><path d="M3.500 15H7L3.500 11.500Z"/><path d="M13.500 15H10L13.500 11.500Z"/></g></svg>
<div class="tri" style="left:1036px;top:184px"></div>
<svg style="left:1050px;top:177px" width="19" height="18" viewBox="0 0 19 18"><path d="M8 5L13 1L18 8L13 14L8 11Z" fill="#5a86d0" stroke="#2a4890" stroke-width=".9"/><path d="M10 6.500L13 4L16 8L13 11.500Z" fill="#cfe0f8"/><path d="M1 3L7 7L1 10Z" fill="#d23a2a"/><path d="M2 17L8 10L9 17Z" fill="#2aa040"/><path d="M1 10L7 7V11Z" fill="#e8a020"/></svg>
<div class="tri" style="left:1075px;top:184px"></div>
<div class="vs" style="left:1093px;top:172px;height:28px"></div>
<svg style="left:1107px;top:178px" width="16" height="16" viewBox="0 0 16 16"><path d="M1 5L5 1.500L15 11L11 14.500Z" fill="#f5d98a" stroke="#c09a30" stroke-width="1"/><path d="M4.500 5.500L6 4M6.500 7.500L8 6M8.500 9.500L10 8M10.500 11.500L12 10" stroke="#a88420" stroke-width=".9"/></svg>
<div class="vs" style="left:1132px;top:172px;height:28px"></div>
<!-- LEFT -->
<div class="a" id="resbar" style="left:0;top:204px;width:32px;height:612px;background:#d9d9d9;border-right:1px solid #bcbcbc;box-sizing:border-box"></div>
<div class="a" style="left:2px;top:286px;width:30px;height:45px;background:#fff;border:1px solid #b4b4b4;border-right:none;box-sizing:border-box"></div>
<!-- gear -->
<svg style="left:8px;top:209px" width="16" height="16" viewBox="0 0 16 16"><circle cx="8" cy="8" r="4.6" fill="none" stroke="#222" stroke-width="1.6"/><g stroke="#222" stroke-width="2"><line x1="8" y1="0.8" x2="8" y2="3"/><line x1="8" y1="13" x2="8" y2="15.2"/><line x1="0.8" y1="8" x2="3" y2="8"/><line x1="13" y1="8" x2="15.2" y2="8"/><line x1="2.9" y1="2.9" x2="4.4" y2="4.4"/><line x1="11.6" y1="11.6" x2="13.1" y2="13.1"/><line x1="2.9" y1="13.1" x2="4.4" y2="11.6"/><line x1="11.6" y1="4.4" x2="13.1" y2="2.9"/></g></svg>
<!-- assembly nav -->
<svg style="left:6px;top:252px" width="26" height="28" viewBox="0 0 26 28"><defs><g id="ycube"><path d="M0 2.200L4 0L8 2.200V6.800L4 9L0 6.800Z" fill="#f2c21c" stroke="#b8900a" stroke-width=".5"/><path d="M0 2.200L4 4.400L8 2.200L4 0Z" fill="#fdf08a"/><path d="M4 4.400V9L8 6.800V2.200Z" fill="#e0a810"/></g></defs><use href="#ycube" x="2" y="2.500"/><use href="#ycube" x="7" y="7"/><use href="#ycube" x="13" y="17.500"/><path d="M5.500 15V26.500M5.500 21H11M14 14.500H23" stroke="#1a1a66" stroke-width="1.400" fill="none"/></svg>
<!-- part nav -->
<svg style="left:6px;top:296px" width="26" height="28" viewBox="0 0 26 28"><path d="M1 4V10C1 12.500 11 12.500 11 10V4Z" fill="#d070c0" stroke="#7a2a70" stroke-width=".8"/><ellipse cx="6" cy="4" rx="5" ry="2" fill="#f0b0e4" stroke="#7a2a70" stroke-width=".8"/><path d="M5.500 12.500V24.500M5.500 19H11M13 10H22" stroke="#1a1a66" stroke-width="1.400" fill="none"/><circle cx="16" cy="19" r="4.300" fill="#f6e0f2" stroke="#8a2a80" stroke-width="1.200"/><circle cx="16" cy="19" r="1.600" fill="#8a2a80"/></svg>
<!-- books -->
<svg style="left:5px;top:339px" width="26" height="26" viewBox="0 0 26 26"><path d="M1 8L5 2H11L7 8Z" fill="#f4c38a"/><rect x="1" y="7" width="6.5" height="18" rx="1" fill="#f08a1e" stroke="#b35a00" stroke-width="0.6"/><path d="M8 8L12 2H18L14 8Z" fill="#a6e59a"/><rect x="8" y="7" width="6.5" height="18" rx="1" fill="#3fbf32" stroke="#1d7a17" stroke-width="0.6"/><path d="M15 8L19 2H25V19L21 25Z" fill="#1e5fb4"/><rect x="15" y="7" width="6.5" height="18" rx="1" fill="#3a8be0" stroke="#174a96" stroke-width="0.6"/><path d="M1.5 21H7M8.500 21H14M15.500 21H21" stroke="#fff" stroke-opacity=".5" stroke-width="1"/></svg>
<!-- info -->
<svg style="left:5px;top:388px" width="28" height="32" viewBox="0 0 28 32"><path d="M9 11.500C14.500 8.500 19.500 10.500 21.500 16.500" fill="none" stroke="#2a56c0" stroke-width="2.600"/><path d="M10.500 5.500C18.500 3 24.500 6.500 26.500 14.500" fill="none" stroke="#2a56c0" stroke-width="2.600"/><circle cx="9.500" cy="21" r="7.600" fill="#2f6fd8" stroke="#173f9a" stroke-width="0.800"/><circle cx="9.500" cy="16.800" r="1.500" fill="#fff"/><path d="M7.500 19.500H10.800V25H12V26.200H7.200V25H8.400V20.700H7.500Z" fill="#fff"/></svg>
<!-- doc globe -->
<svg style="left:9px;top:447px" width="19" height="24" viewBox="0 0 20 26"><path d="M1 1H13L19 7V25H1Z" fill="#f4f8ff" stroke="#3d66b0" stroke-width="1.300"/><path d="M13 1V7H19" fill="#dbe6f8" stroke="#3d66b0" stroke-width="1"/><circle cx="10" cy="16" r="5.800" fill="#2d9a44" stroke="#1c5f6a" stroke-width="0.800"/><path d="M6 13.500C8 11.500 10.500 12.500 11.500 14.500C12.500 16.500 10.500 19 8 18.500C6.500 17.500 5.500 15.500 6 13.500Z" fill="#8ad0f0"/></svg>
<!-- clock -->
<svg style="left:7px;top:502px" width="22" height="22" viewBox="0 0 26 26"><circle cx="13" cy="13" r="11.600" fill="#c8d8ec" stroke="#5a5a5a" stroke-width="1.800"/><circle cx="13" cy="13" r="9" fill="#f6faff" stroke="#9ab" stroke-width="0.600"/><path d="M13 5.500V13.500H19" fill="none" stroke="#111" stroke-width="2.200"/><g fill="#333"><circle cx="13" cy="4.900" r=".8"/><circle cx="13" cy="21.100" r=".8"/><circle cx="4.900" cy="13" r=".8"/><circle cx="21.100" cy="13" r=".8"/><circle cx="7.300" cy="7.300" r=".6"/><circle cx="18.700" cy="18.700" r=".6"/><circle cx="7.300" cy="18.700" r=".6"/><circle cx="18.700" cy="7.300" r=".6"/></g></svg>
<!-- robot -->
<svg style="left:7px;top:543px" width="22" height="24" viewBox="0 0 22 24"><ellipse cx="13" cy="21" rx="7" ry="1.800" fill="#b8b8c0"/><path d="M9 4.500L13 1.500L19.500 3.500L20 6.500L17.500 7L15 5L12.500 7.500Z" fill="#c8ccd2" stroke="#3a3a40" stroke-width="0.900"/><path d="M12.500 7.500L14.500 10.500L10.500 14L13.500 17.500L17 19.500L15 21.500L9.500 19.500L5 20L3.500 17L7.500 13L9.500 9.500Z" fill="#dcdfe4" stroke="#3a3a40" stroke-width="0.900"/><circle cx="9.500" cy="16.500" r="2" fill="#fff" stroke="#333" stroke-width="0.800"/><ellipse cx="4.500" cy="20.500" rx="3.500" ry="2" fill="#f0a020" stroke="#a06000" stroke-width="0.600"/></svg>

<div class="a" id="nav" style="left:32px;top:204px;width:220px;height:612px;background:#fff;border-right:1px solid #8c8c8c;box-sizing:border-box"></div>
<div class="t" style="left:42px;top:210px;font-size:15px;line-height:22px">部件导航器</div>
<div class="a" style="left:221px;top:215px;width:14px;height:13px;border:1.500px solid #111;border-top:2.500px solid #111;box-sizing:border-box"></div>
<!-- tree box -->
<div class="a" style="left:38px;top:235px;width:203px;height:360px;border:1px solid #d4d4d4;box-sizing:border-box;background:#fff"></div>
<div class="a" style="left:39px;top:236px;width:201px;height:24px;background:#ececec;border-bottom:1px solid #d0d0d0"></div>
<div class="t" style="left:46px;top:239px;font-size:15px;line-height:22px">名称</div>
<div class="a" style="left:94px;top:245px;width:0;height:0;border-left:6px solid transparent;border-right:6px solid transparent;border-bottom:7px solid #111"></div>
<div class="a" style="left:39px;top:261px;width:201px;height:312px;background:repeating-linear-gradient(to bottom,#fff 0,#fff 23px,#e9e9e9 23px,#e9e9e9 24px,#f8f8f8 24px,#f8f8f8 47px,#e9e9e9 47px,#e9e9e9 48px)"></div>
<div class="a" style="left:39px;top:573px;width:201px;height:21px;background:#efefef"></div>
<div class="a" style="left:61px;top:582px;width:79px;height:3px;background:#7a7a7a;border-radius:1.500px"></div>
<!-- tree dotted lines -->
<div class="a" style="left:49px;top:279px;width:0;height:156px;border-left:1px dotted #aaa"></div>
<div class="a" style="left:68px;top:303px;width:0;height:114px;border-left:1px dotted #aaa"></div>
<div class="a" style="left:87px;top:309px;width:0;height:84px;border-left:1px dotted #aaa"></div>
<div class="a" style="left:55px;top:273px;width:5px;height:0;border-top:1px dotted #aaa"></div>
<div class="a" style="left:74px;top:297px;width:5px;height:0;border-top:1px dotted #aaa"></div>
<div class="a" style="left:88px;top:321px;width:9px;height:0;border-top:1px dotted #aaa"></div>
<div class="a" style="left:88px;top:345px;width:9px;height:0;border-top:1px dotted #aaa"></div>
<div class="a" style="left:88px;top:369px;width:9px;height:0;border-top:1px dotted #aaa"></div>
<div class="a" style="left:88px;top:393px;width:9px;height:0;border-top:1px dotted #aaa"></div>
<div class="a" style="left:69px;top:417px;width:12px;height:0;border-top:1px dotted #aaa"></div>
<!-- expanders -->
<div class="a" style="left:44px;top:268px;width:11px;height:11px;border:1px solid #c8c8c8;background:#fff;box-sizing:border-box"></div><div class="a" style="left:46px;top:273px;width:7px;height:1px;background:#222"></div>
<div class="a" style="left:63px;top:292px;width:11px;height:11px;border:1px solid #c8c8c8;background:#fff;box-sizing:border-box"></div><div class="a" style="left:65px;top:297px;width:7px;height:1px;background:#222"></div>
<div class="a" style="left:44px;top:436px;width:11px;height:11px;border:1px solid #c8c8c8;background:#fff;box-sizing:border-box"></div><div class="a" style="left:46px;top:441px;width:7px;height:1px;background:#222"></div><div class="a" style="left:49px;top:438px;width:1px;height:7px;background:#222"></div>
<!-- checks -->
<svg width="0" height="0"><defs><path id="chk" d="M0.600 7L3.300 4.600L5.200 7.400C7.100 4.400 9.700 1.900 12.500 0.200L13.600 1.900C10.800 4.600 8.400 8.200 6.700 12.300H4.100Z" fill="#33bb3f" stroke="#1f8a2a" stroke-width=".6"/></defs></svg>
<svg style="left:61px;top:268px" width="15" height="14"><use href="#chk" transform="scale(.92)"/></svg>
<svg style="left:80px;top:292px" width="15" height="14"><use href="#chk" transform="scale(.92)"/></svg>
<svg style="left:99px;top:316px" width="15" height="14"><use href="#chk" transform="scale(.92)"/></svg>
<svg style="left:99px;top:340px" width="15" height="14"><use href="#chk" transform="scale(.92)"/></svg>
<svg style="left:99px;top:364px" width="15" height="14"><use href="#chk" transform="scale(.92)"/></svg>
<svg style="left:99px;top:388px" width="15" height="14"><use href="#chk" transform="scale(.92)"/></svg>
<!-- tree icons -->
<svg style="left:75px;top:265px" width="17" height="16" viewBox="0 0 17 16"><path d="M3 1.500H15.500V11" fill="none" stroke="#445" stroke-width="1.300"/><rect x="1" y="3.500" width="12.500" height="11" fill="#e8ecfa" stroke="#5a66a8" stroke-width="1.200"/><rect x="7" y="10" width="6" height="4" fill="#fff" stroke="#667" stroke-width="0.800"/></svg>
<svg style="left:95px;top:291px" width="15" height="12" viewBox="0 0 15 12"><rect x=".6" y=".6" width="13.800" height="10.800" fill="#dfe3f7" stroke="#7d88c0" stroke-width="1.200"/><rect x="7.500" y="6" width="6.500" height="5" fill="#fff" stroke="#778" stroke-width="0.800"/><path d="M7.500 8.500H14" stroke="#778" stroke-width=".6"/></svg>
<svg style="left:114px;top:313px" width="15" height="16" viewBox="0 0 15 16"><rect x="1" y="1" width="12.500" height="14" rx="1" fill="#c9c9c9" stroke="#111" stroke-width="1.600"/><path d="M3.500 1V15" stroke="#111" stroke-width="1"/><circle cx="10.500" cy="12" r="1.600" fill="#fff" stroke="#111" stroke-width="1"/></svg>
<svg style="left:112px;top:336px" width="18" height="18" viewBox="0 0 18 18"><path d="M2 9L8 2L10.500 4.200L4.500 11.200Z" fill="#fbe9ea" stroke="#d23a3a" stroke-width="1.200"/><path d="M4 6.500L6.500 8.700M6 4.300L8.500 6.500" stroke="#d23a3a" stroke-width="1"/><path d="M5 11.500L7.500 14.500" stroke="#d23a3a" stroke-width="1" stroke-dasharray="1.500 1"/><path d="M8 16.500V11L11 8.500H14.500L16.500 10.500V16.500Z" fill="#fff" stroke="#222" stroke-width="1.200"/></svg>
<svg style="left:114px;top:361px" width="15" height="16" viewBox="0 0 15 16"><rect x="1" y="1.500" width="13" height="6" fill="#fff" stroke="#222" stroke-width="1.100"/><rect x="5.800" y="3" width="3.400" height="2.600" fill="none" stroke="#222" stroke-width="0.900"/><rect x="1" y="9.500" width="13" height="5.500" fill="#fff" stroke="#8a1a22" stroke-width="1.100"/><path d="M2.500 12.300H12.500" stroke="#c82a30" stroke-width="1.800" stroke-dasharray="2.200 1.500"/></svg>
<svg style="left:114px;top:385px" width="15" height="16" viewBox="0 0 15 16"><rect x="1" y="1.500" width="13" height="6" fill="#fff" stroke="#222" stroke-width="1.100"/><rect x="5.800" y="3" width="3.400" height="2.600" fill="none" stroke="#222" stroke-width="0.900"/><rect x="1" y="9.500" width="13" height="5.500" fill="#fff" stroke="#8a1a22" stroke-width="1.100"/><path d="M2.500 12.300H12.500" stroke="#c82a30" stroke-width="1.800" stroke-dasharray="2.200 1.500"/></svg>
<!-- folder icons -->
<svg width="0" height="0"><defs><g id="fold"><linearGradient id="fg" x1="0" y1="0" x2="0.300" y2="1"><stop offset="0" stop-color="#fffbc0"/><stop offset=".55" stop-color="#fbd850"/><stop offset="1" stop-color="#e89a08"/></linearGradient><path d="M1 3.500H5.500L7 5H14V13H1Z" fill="#f3c53a" stroke="#8a6a10" stroke-width="0.900"/><path d="M1 13L3.500 7H16.500L14 13Z" fill="url(#fg)" stroke="#8a6a10" stroke-width="0.900"/></g></defs></svg>
<div class="t" style="left:81px;top:406px;font:bold 18px/22px 'Liberation Sans',sans-serif;color:#f0d020;-webkit-text-stroke:.6px #8a7400">?</div>
<svg style="left:93px;top:409px" width="18" height="15"><use href="#fold"/></svg>
<svg style="left:58px;top:433px" width="18" height="15"><use href="#fold"/></svg>
<!-- tree text -->
<div class="t" style="left:94px;top:263px;font-size:15px;line-height:22px">图纸</div>
<div class="t" style="left:113px;top:287px;font-size:15px;line-height:22px">工作表 <span style="letter-spacing:.35px">"A3_1" (...</span></div>
<div class="t" style="left:132px;top:311px;font-size:15px;line-height:22px">导入的 <span style="letter-spacing:.95px">"Top...</span></div>
<div class="t" style="left:132px;top:335px;font-size:15px;line-height:22px">投影 <span style="letter-spacing:.25px">"AUXIL...</span></div>
<div class="t" style="left:132px;top:359px;font-size:15px;line-height:22px">投影 <span style="letter-spacing:.3px">"ORTH...</span></div>
<div class="t" style="left:132px;top:383px;font-size:15px;line-height:22px">投影 <span style="letter-spacing:.3px">"ORTH...</span></div>
<div class="t" style="left:113px;top:407px;font-size:15px;line-height:22px">过时</div>
<div class="t" style="left:79px;top:431px;font-size:15px;line-height:22px">组</div>
<!-- splitter -->
<div class="a" style="left:38px;top:596px;width:204px;height:5px;background:#d6d6d6;border-top:1px solid #a4a4a4;border-bottom:1px solid #b0b0b0;box-sizing:border-box"></div>
<!-- dependencies -->
<div class="a" style="left:38px;top:600px;width:204px;height:220px;border:1px solid #dcdcdc;box-sizing:border-box"></div>
<div class="t" style="left:45px;top:604px;font-size:18px;line-height:26px;color:#2a6884">相关性</div>
<svg style="left:222px;top:609px" width="15" height="11" viewBox="0 0 15 11"><path d="M1.500 9.500L7.500 2.500L13.500 9.500" fill="none" stroke="#1a5f7a" stroke-width="3"/></svg>
<div class="a" style="left:45px;top:633px;width:156px;height:190px;border:1px solid #d4d4d4;box-sizing:border-box;background:repeating-linear-gradient(to bottom,#fff 0,#fff 23px,#ececec 23px,#ececec 24px,#f9f9f9 24px,#f9f9f9 47px,#ececec 47px,#ececec 48px)"></div>
<div class="a" style="left:203px;top:633px;width:32px;height:32px;border:1px solid #858585;box-sizing:border-box;background:#fafafa"></div>
<div class="a" style="left:203px;top:667px;width:32px;height:32px;border:1px solid #d0d0d0;box-sizing:border-box;background:#fafafa"></div>
<div class="a" style="left:203px;top:701px;width:32px;height:32px;border:1px solid #d0d0d0;box-sizing:border-box;background:#fafafa"></div>
<div class="a" style="left:203px;top:735px;width:32px;height:32px;border:1px solid #d0d0d0;box-sizing:border-box;background:#fafafa"></div>
<svg style="left:206px;top:636px" width="26" height="26" viewBox="0 0 26 26"><circle cx="10" cy="10" r="7.500" fill="#fdfdfd" stroke="#555" stroke-width="1.500"/><path d="M15.500 15.500L23 23" stroke="#333" stroke-width="3.200" stroke-linecap="round"/><path d="M16 16L22.500 22.500" stroke="#b9a070" stroke-width="1.200" stroke-linecap="round"/></svg>
<svg style="left:212px;top:675px" width="16" height="16" viewBox="0 0 18 18"><path d="M1 6H9V1.500L17 9L9 16.500V12H1Z" fill="#aab9bd" stroke="#93a4a8" stroke-width="0.800"/></svg>
<svg style="left:211px;top:709px" width="16" height="16" viewBox="0 0 18 18"><path d="M17 6H9V1.500L1 9L9 16.500V12H17Z" fill="#aab9bd" stroke="#93a4a8" stroke-width="0.800"/></svg>
<svg style="left:209px;top:739px" width="22" height="24" viewBox="0 0 22 24"><g fill="#d8d8d8" stroke="#999" stroke-width="0.800"><rect x="1" y="1" width="6" height="6"/><rect x="1" y="9" width="6" height="6"/><rect x="1" y="17" width="6" height="6"/></g><path d="M1 4H7M4 1V7M1 12H7M4 9V15M1 20H7M4 17V23" stroke="#999" stroke-width="0.800"/><g fill="none" stroke="#c9a898" stroke-width="1.400"><path d="M9 3H17V7M14.500 5L17 8L19.500 5"/><path d="M9 11H17V15M14.500 13L17 16L19.500 13"/><path d="M9 19H17V22M14.500 20.500L17 23L19.500 20.500"/></g></svg>
<!-- GRAPHICS -->
<div class="a" id="gfx" style="left:252px;top:204px;width:1102px;height:612px;background:#cccccc"></div>
<div class="a" style="left:252px;top:204px;width:1102px;height:24px;background:#fff"></div>
<div class="a" style="left:252px;top:228px;width:1102px;height:2px;background:#4d97b3"></div>
<svg style="left:258px;top:208px" width="16" height="16" viewBox="0 0 16 16"><path d="M2 5L5 2.500H8.500V7.500H13.500V11L10.500 14H2Z" fill="#3f6fd8" stroke="#1c3c9c" stroke-width="1"/><path d="M2 5H5.500V10.500H10.500V14M5.500 5L8.500 2.500M10.500 10.500L13.500 7.500" fill="none" stroke="#1c3c9c" stroke-width="0.900"/><path d="M5.500 5L8.500 2.500V7.500H13.500L10.500 10.500H5.500Z" fill="#7fa4f0" stroke="#1c3c9c" stroke-width="0.700"/></svg>
<div class="t" style="left:278px;top:205px;font-size:16.700px;line-height:24px;letter-spacing:-.1px">h015.prt</div>
<svg style="left:0;top:0" width="1354" height="816" viewBox="0 0 1354 816"><path d="M1174.500 476L1228 404" stroke="#e8ac68" stroke-width="1" fill="none"/><path d="M742 404H1126L1222 548V596L1126 692H742Z" fill="none" stroke="#000" stroke-width="2" stroke-linejoin="miter"/><circle cx="1174.500" cy="476.600" r="4.300" fill="#1e86d6" stroke="#08305c" stroke-width="1.200"/><path d="M1170.500 470.700L1178.500 482.700" stroke="#000" stroke-width="1.200" opacity=".55"/></svg>
<div class="a" style="left:1228px;top:380px;width:97px;height:31px;background:#f1f1f1;border:1px solid #bdbdbd;box-sizing:border-box"></div>
<div class="a" style="left:1231px;top:383px;width:2px;height:26px;background:repeating-linear-gradient(to bottom,#b8b8b8 0,#b8b8b8 1.500px,transparent 1.500px,transparent 3.500px)"></div>
<div class="a" style="left:1235px;top:383px;width:2px;height:26px;background:repeating-linear-gradient(to bottom,#b8b8b8 0,#b8b8b8 1.500px,transparent 1.500px,transparent 3.500px)"></div>
<div class="t" style="left:1246px;top:386px;font-size:15px;line-height:22px;color:#2a2a2a">倒斜角对象</div>
<div class="t" style="left:1141px;top:795px;height:18px;line-height:18px;color:#858585;text-shadow:1px 1px 0 #f4f4f4"><span style="display:inline-block;font:13.330px/18px 'Liberation Mono',monospace;transform:scaleY(1.5);transform-origin:0 78%">UG</span><span style="display:inline-block;font:italic 15px/18px 'Noto Serif CJK SC',serif;letter-spacing:.3px;margin-left:0px">爱好者论坛</span><span style="display:inline-block;font:13.330px/18px 'Liberation Mono',monospace;transform:scaleY(1.5);transform-origin:0 78%;margin-left:10px">WWW.UGSNX.COM</span></div>
<!-- DIALOG -->
<div class="a" id="dlg" style="left:344px;top:146px;width:380px;height:449px;background:#efefef;border:1px solid #dcdcdc;border-top:none;box-sizing:border-box"></div>
<div class="a" style="left:344px;top:146px;width:380px;height:26.500px;background:#4f9fba"></div>
<svg style="left:353px;top:152px" width="16" height="16" viewBox="0 0 16 16"><g fill="#e6f3f8"><circle cx="8" cy="8" r="5.700"/><g><rect x="6.600" y="0.800" width="2.800" height="14.400" rx=".6"/><rect x="6.600" y="0.800" width="2.800" height="14.400" rx=".6" transform="rotate(45 8 8)"/><rect x="6.600" y="0.800" width="2.800" height="14.400" rx=".6" transform="rotate(90 8 8)"/><rect x="6.600" y="0.800" width="2.800" height="14.400" rx=".6" transform="rotate(135 8 8)"/></g></g><circle cx="8" cy="8" r="2.700" fill="#4f9fba"/></svg>
<div class="t" style="left:376px;top:148px;font-size:18px;line-height:26px;color:#e8f5fa">倒斜角尺寸</div>
<svg style="left:677px;top:152px" width="16" height="16" viewBox="0 0 16 16"><path d="M3.300 5.500A5.200 5.200 0 1 0 8 2.800" fill="none" stroke="#eaf6fa" stroke-width="1.800"/><path d="M1 3.200L3.800 8L6.600 3.800Z" fill="#eaf6fa"/></svg>
<svg style="left:701px;top:153px" width="14" height="14" viewBox="0 0 14 14"><path d="M1.500 1.500L12.500 12.500M12.500 1.500L1.500 12.500" stroke="#f4fbfd" stroke-width="2.200"/></svg>
<!-- section 1 -->
<div class="a" style="left:350px;top:176px;width:368px;height:109px;background:#fff"></div>
<div class="a" style="left:350px;top:285px;width:368px;height:4px;background:linear-gradient(#cfcfcf 0,#cfcfcf 1px,#ededed 1px,#f4f4f4 4px)"></div>
<div class="t" style="left:358px;top:180px;font-size:17.500px;line-height:26px;color:#2b6d8c">参考</div>
<svg style="left:697px;top:185px" width="15" height="11" viewBox="0 0 15 11"><path d="M1.500 9.500L7.500 2.500L13.500 9.500" fill="none" stroke="#1a5f7a" stroke-width="3"/></svg>
<svg style="left:360px;top:221px" width="15" height="14"><use href="#chk"/></svg>
<div class="t" style="left:379px;top:217px;font-size:15px;line-height:22px">选择倒斜角对象</div>
<div class="a" style="left:677px;top:211px;width:32px;height:32px;background:#fff;border:1px solid #9a9a9a;box-sizing:border-box"></div>
<div class="a" style="left:359px;top:245px;width:316px;height:32px;background:#ffe07c"></div>
<div class="a" style="left:677px;top:245px;width:32px;height:32px;background:#ffe07c"></div>
<div class="t" style="left:361px;top:251px;font:15.500px/22px 'DejaVu Sans',sans-serif;color:#e01414">✱</div>
<div class="t" style="left:379px;top:251px;font-size:15px;line-height:22px">选择参考对象</div>
<svg style="left:677px;top:211px" width="32" height="32" viewBox="0 0 32 32"><path d="M4.700 13.400H11M15.500 20.500V28.500" fill="none" stroke="#111" stroke-width="1.300"/><path d="M11 13.200L15.500 20.700" stroke="#a00f24" stroke-width="2"/><path d="M25.500 11H20.300L15 15.800" fill="none" stroke="#b01024" stroke-width="1"/><path d="M13.800 16.800L15.300 13.600L17.600 16.100Z" fill="#b01024"/><text x="20" y="10" font-family="Liberation Sans,sans-serif" font-size="8.500" font-weight="bold" fill="#b01024">c</text></svg>
<svg style="left:677px;top:245px" width="32" height="32" viewBox="0 0 32 32"><path d="M4.500 13.500H11L15.500 20.700V27.500H4.500Z" fill="#fff"/><path d="M11 13.200L15.500 20.700V28.500" fill="none" stroke="#111" stroke-width="1.300"/><path d="M4.700 13.400H11" stroke="#a00f24" stroke-width="2"/><path d="M25.500 11H20.300L15 15.800" fill="none" stroke="#b01024" stroke-width="1"/><path d="M13.800 16.800L15.300 13.600L17.600 16.100Z" fill="#b01024"/><text x="20" y="10" font-family="Liberation Sans,sans-serif" font-size="8.500" font-weight="bold" fill="#b01024">c</text></svg>
<!-- section 2 -->
<div class="a" style="left:350px;top:289px;width:368px;height:129px;background:#fff"></div>
<div class="a" style="left:350px;top:418px;width:368px;height:4px;background:linear-gradient(#cfcfcf 0,#cfcfcf 1px,#ededed 1px,#f4f4f4 4px)"></div>
<div class="t" style="left:358px;top:292px;font-size:17.500px;line-height:26px;color:#2b6d8c">原点</div>
<svg style="left:697px;top:297px" width="15" height="11" viewBox="0 0 15 11"><path d="M1.500 9.500L7.500 2.500L13.500 9.500" fill="none" stroke="#1a5f7a" stroke-width="3"/></svg>
<div class="t" style="left:359px;top:329px;font-size:15px;line-height:22px;color:#b4b4b4">指定位置</div>
<div class="a" style="left:651px;top:327px;width:24px;height:24px;background:#fbfbfb;border:1px solid #d6d6d6;box-sizing:border-box"></div>
<div class="a" style="left:677px;top:323px;width:32px;height:32px;background:#fdfdfd;border:1px solid #d6d6d6;box-sizing:border-box"></div>
<svg style="left:653px;top:329px" width="20" height="20" viewBox="0 0 20 20"><text x="7.500" y="16" font-family="Liberation Serif,serif" font-size="14" font-weight="bold" fill="#b9b9b9">A</text><path d="M3 7C3 3 8 3 8 7C8 9 6 10 5.500 12" fill="none" stroke="#c9c3a8" stroke-width="1.600"/><circle cx="4" cy="15" r="1" fill="#bbb"/><circle cx="2.500" cy="17.500" r=".8" fill="#bbb"/></svg>
<svg style="left:681px;top:327px" width="24" height="24" viewBox="0 0 24 24"><path d="M12 1V9M12 15V23M1 12H9M15 12H23" stroke="#c2c2c2" stroke-width="1"/><circle cx="12" cy="12" r="1.300" fill="#c2c2c2"/><text x="15" y="9" font-family="Liberation Sans,sans-serif" font-size="10" fill="#bdbdbd">X</text></svg>
<div class="a" style="left:359px;top:360px;width:18px;height:18px;background:#f4f4f4;border:1px solid #5a5a5a;border-radius:4px;box-sizing:border-box"></div>
<div class="t" style="left:381px;top:359px;font-size:15px;line-height:22px">自动放置</div>
<div class="a" style="left:359px;top:383px;width:350px;height:27px;background:#f0f0f0;border:1px solid #d4d4d4;box-sizing:border-box"></div>
<div class="t" style="left:368px;top:386px;font-size:15px;line-height:22px;color:#2b6d8c">对齐</div>
<svg style="left:690px;top:390px" width="13" height="11" viewBox="0 0 13 11"><path d="M1.200 1.500L6.500 8.800L11.800 1.500" fill="none" stroke="#1f6480" stroke-width="2.400"/></svg>
<!-- section 3 -->
<div class="a" style="left:350px;top:422px;width:368px;height:108px;background:#fff"></div>
<div class="a" style="left:350px;top:530px;width:368px;height:3px;background:linear-gradient(#cfcfcf 0,#cfcfcf 1px,#ededed 1px,#f0f0f0 3px)"></div>
<div class="t" style="left:358px;top:426px;font-size:17.500px;line-height:26px;color:#2b6d8c">设置</div>
<svg style="left:697px;top:431px" width="15" height="11" viewBox="0 0 15 11"><path d="M1.500 9.500L7.500 2.500L13.500 9.500" fill="none" stroke="#1a5f7a" stroke-width="3"/></svg>
<div class="t" style="left:359px;top:462px;font-size:15px;line-height:22px">设置</div>
<div class="t" style="left:359px;top:496px;font-size:15px;line-height:22px">选择要继承的尺寸</div>
<div class="a" style="left:677px;top:456px;width:32px;height:32px;background:#fff;border:1px solid #9a9a9a;box-sizing:border-box"></div>
<div class="a" style="left:677px;top:490px;width:32px;height:32px;background:#fff;border:1px solid #9a9a9a;box-sizing:border-box"></div>
<svg style="left:677px;top:456px" width="32" height="32" viewBox="0 0 32 32"><text x="4.500" y="15.500" font-family="Liberation Sans,sans-serif" font-size="13" fill="#1c1060">A</text><text x="15.500" y="24.500" transform="skewX(-14)" font-family="Liberation Serif,serif" font-size="21" font-weight="bold" font-style="italic" fill="#1616a4">A</text><path d="M8 26.300H27" stroke="#1616a4" stroke-width="1.300"/></svg>
<svg style="left:677px;top:490px" width="32" height="32" viewBox="0 0 32 32"><defs><linearGradient id="dg" x1="0" y1="0" x2="1" y2="1"><stop offset="0" stop-color="#eef4fa"/><stop offset="1" stop-color="#b8cce0"/></linearGradient><linearGradient id="bg2" x1="0" y1="0" x2="1" y2="1"><stop offset="0" stop-color="#8ab0d8"/><stop offset="1" stop-color="#28486a"/></linearGradient></defs><path d="M5.200 25.800L6.500 22L17 11.500L20 14.500L9.500 25L6 26.500Z" fill="url(#dg)" stroke="#222" stroke-width="1"/><path d="M15 10L22 17" stroke="#1a2a3a" stroke-width="2.800" stroke-linecap="round"/><path d="M18 12.500L21.500 8C23 6 26 6.500 26.500 8.500C27 10.500 25.500 11.500 24 12.800L20 15.500Z" fill="url(#bg2)" stroke="#1a2a3a" stroke-width="1"/></svg>
<div class="a" style="left:527px;top:538px;width:0;height:0;border-left:6px solid transparent;border-right:6px solid transparent;border-bottom:6px solid #111"></div>
<div class="a" style="left:350px;top:547px;width:368px;height:1px;background:#d8d8d8"></div>
<div class="a" style="left:648px;top:556px;width:60px;height:28px;background:#6db3cb"></div>
<div class="t" style="left:663px;top:559px;font-size:15px;line-height:22px;color:#f2fafc">关闭</div>
</body></html>
